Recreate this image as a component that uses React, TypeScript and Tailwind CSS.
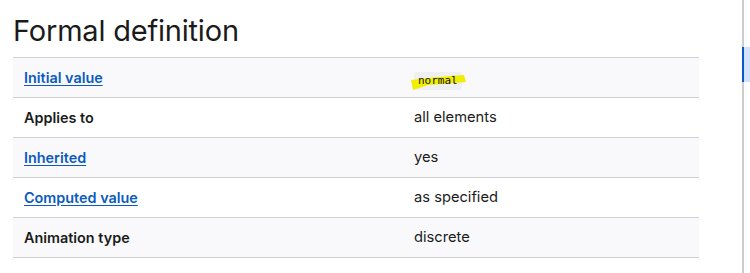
import React from 'react';

type Row = { label: string; link: boolean; value: string; code?: boolean };

const rows: Row[] = [
  { label: 'Initial value', link: true, value: 'normal', code: true },
  { label: 'Applies to', link: false, value: 'all elements' },
  { label: 'Inherited', link: true, value: 'yes' },
  { label: 'Computed value', link: true, value: 'as specified' },
  { label: 'Animation type', link: false, value: 'discrete' },
];

export default function App() {
  return (
    <div
      className="flex h-[273px] w-[750px] overflow-hidden bg-white text-[#1b1b1b]"
      style={{ fontFamily: 'Inter, "Noto Sans", sans-serif' }}
    >
      <div className="w-[742px] pl-[13px] pt-[13px]">
        <h2 className="mb-2 text-[29px] font-normal leading-9 tracking-[-0.2px]">Formal definition</h2>

        <div className="w-[686px] border-b border-[#d1d1d1]">
          {rows.map((row, i) => (
            <div
              key={row.label}
              className={
                'flex h-10 items-center border-t border-[#d1d1d1] ' +
                (i % 2 === 0 ? 'bg-[#f9f9fb]' : 'bg-white')
              }
            >
              <div className="w-[390px] pl-[11px] text-[14.4px]">
                {row.link ? (
                  <a href="#" className="font-semibold text-[#0b5bc0] underline underline-offset-2">
                    {row.label}
                  </a>
                ) : (
                  <span className="font-semibold">{row.label}</span>
                )}
              </div>
              <div className="pl-[11px] text-[14.7px]">
                {row.code ? (
                  <span className="relative inline-block translate-y-[2px]">
                    {/* code chip background */}
                    <span className="absolute inset-0 rounded bg-[#efeff1]" />
                    {/* highlighter mark */}
                    <svg
                      className="absolute left-[-4px] top-[3px]"
                      width="60"
                      height="18"
                      viewBox="0 0 60 18"
                    >
                      <path d="M1 5 Q25 2 54 0 L56 7 Q30 9 18 10 L3 15 Z" fill="#f2ee00" />
                    </svg>
                    <code
                      className="relative block px-1 py-[2px] text-[11px] leading-[14px] text-[#111]"
                      style={{ fontFamily: '"DejaVu Sans Mono", "Liberation Mono", monospace' }}
                    >
                      {row.value}
                    </code>
                  </span>
                ) : (
                  <span>{row.value}</span>
                )}
              </div>
            </div>
          ))}
        </div>
      </div>

      {/* scrollbar-ish side strip */}
      <div className="relative w-[8px] border-l-2 border-[#cdcdcd]">
        <div className="absolute left-[-2px] top-[47px] h-[35px] w-[8px] border-l-2 border-[#0b57d0] bg-[#d3e3fd]" />
      </div>
    </div>
  );
}
